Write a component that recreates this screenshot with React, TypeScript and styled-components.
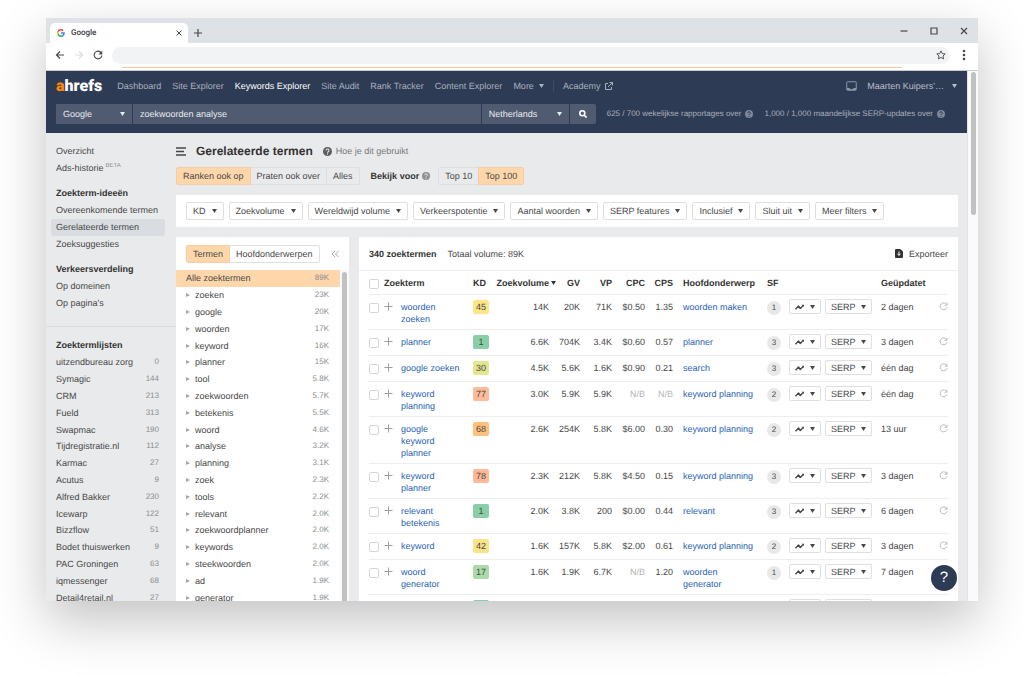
import React from "react";
import styled, { createGlobalStyle, css } from "styled-components";

const c = {
  navy: "#2e3b55",
  field: "#505b72",
  page: "#e9eaec",
  peach: "#ffd7ab",
  peachEdge: "#f4cda2",
  edge: "#dfdfe0",
  line: "#eeeeee",
  text: "#484848",
  strong: "#333333",
  muted: "#8b8c8e",
  link: "#2b63b6",
};

const Global = createGlobalStyle`
  *, *::before, *::after { box-sizing: border-box; }
  body {
    margin: 0;
    background: #ffffff;
    overflow: hidden;
  }
  body, button, input, select {
    font-family: "Liberation Sans", Arial, sans-serif;
    font-size: 9px;
    line-height: 12px;
    color: ${c.text};
    text-rendering: geometricPrecision;
  }
  button { cursor: pointer; }
  a { text-decoration: none; color: inherit; }
  svg { display: block; flex: none; }
`;

/* ---------- browser frame ---------- */

const Desktop = styled.div`
  display: flex;
  height: 100vh;
  padding: 18px 46px 74px;
`;

const BrowserWindow = styled.div`
  flex: 1;
  min-width: 0;
  display: flex;
  flex-direction: column;
  overflow: hidden;
  background: ${c.page};
  box-shadow: 0 20px 50px rgba(0, 0, 0, 0.24);
`;

const TabStrip = styled.div`
  flex: none;
  display: flex;
  align-items: flex-end;
  height: 25px;
  padding-left: 4px;
  background: #dee1e6;
`;

const Tab = styled.div`
  display: flex;
  align-items: center;
  gap: 6px;
  width: 138px;
  height: 20px;
  padding: 0 6px 0 7px;
  border-radius: 5px 5px 0 0;
  background: #ffffff;
`;

const TabTitle = styled.span`
  flex: 1;
  font-family: Roboto, sans-serif;
  font-size: 8px;
  font-weight: 500;
  color: #3c4043;
`;

const IconButton = styled.button`
  display: flex;
  align-items: center;
  justify-content: center;
  padding: 0;
  border: 0;
  background: none;
  color: #45494d;

  &:disabled { color: #dcdddf; }
`;

const NewTab = styled(IconButton)`
  width: 20px;
  height: 20px;
`;

const WindowButtons = styled.div`
  display: flex;
  align-items: center;
  gap: 20px;
  height: 25px;
  margin-left: auto;
  padding-right: 9px;
`;

const AddressRow = styled.div`
  flex: none;
  display: flex;
  align-items: center;
  gap: 9px;
  height: 24px;
  padding: 0 9px;
  background: #ffffff;
`;

const Address = styled.div`
  flex: 1;
  display: flex;
  align-items: center;
  height: 17px;
  padding-right: 4px;
  border-radius: 9px;
  background: #f1f3f4;
`;

const AddressInput = styled.input`
  flex: 1;
  border: 0;
  padding: 0 10px;
  background: none;
  outline: none;
`;

const LoadingTrack = styled.div`
  flex: none;
  height: 4px;
  padding: 0 76px;
  background: #ffffff;
  border-bottom: 1px solid #c9cbd0;
`;

const LoadingBar = styled.div`
  height: 1px;
  background: #f8c598;
`;

const Viewport = styled.div`
  flex: 1;
  min-height: 0;
  display: flex;
`;

const Page = styled.div`
  position: relative;
  flex: 1;
  min-width: 0;
  display: flex;
  flex-direction: column;
  overflow: hidden;
`;

const ScrollTrack = styled.div`
  flex: none;
  width: 11px;
  padding: 1px 3px;
  background: #fafafa;
  border-left: 1px solid #e4e4e6;
`;

const ScrollThumb = styled.div<{ $h: string }>`
  width: 5px;
  height: ${(p) => p.$h};
  border-radius: 3px;
  background: #c1c1c1;
`;

/* ---------- application header ---------- */

const Header = styled.header`
  flex: none;
  padding: 5px 10px 9px;
  background: ${c.navy};
`;

const NavRow = styled.nav`
  display: flex;
  align-items: center;
  gap: 11px;
  height: 20px;
  color: #a9b0bc;
`;

const Logo = styled.a`
  margin-right: 4px;
  font-family: Roboto, sans-serif;
  font-size: 16px;
  font-weight: 900;
  line-height: 16px;
  color: #ffffff;
`;

const LogoMark = styled.span`
  color: #ff8800;
`;

const NavLink = styled.a<{ $active?: boolean }>`
  display: flex;
  align-items: center;
  gap: 5px;
  white-space: nowrap;
  color: ${(p) => (p.$active ? "#ffffff" : "inherit")};
`;

const NavDivider = styled.span`
  width: 1px;
  height: 12px;
  margin: 0 -2px;
  background: #414d65;
`;

const Account = styled.div`
  display: flex;
  align-items: center;
  gap: 10px;
  margin-left: auto;
`;

const AccountButton = styled.button`
  display: flex;
  align-items: center;
  gap: 8px;
  padding: 0;
  border: 0;
  background: none;
  color: #b9bfc9;
`;

const SearchRow = styled.div`
  display: flex;
  align-items: center;
  gap: 11px;
  margin-top: 8px;
`;

const SearchForm = styled.form`
  flex: 1;
  min-width: 0;
  display: flex;
  gap: 1px;
  height: 20px;
`;

const SelectBox = styled.label<{ $w: number }>`
  position: relative;
  flex: none;
  width: ${(p) => p.$w}px;
  background: ${c.field};
  color: #e9ebee;

  svg {
    position: absolute;
    right: 7px;
    top: 8px;
    pointer-events: none;
  }
`;

const Select = styled.select`
  appearance: none;
  width: 100%;
  height: 100%;
  padding: 0 7px;
  border: 0;
  background: transparent;
  color: #e9ebee;
`;

const Keyword = styled.input`
  flex: 1;
  min-width: 0;
  padding: 0 7px;
  border: 0;
  border-radius: 0;
  background: ${c.field};
  color: #e9ebee;
`;

const SearchButton = styled(IconButton)`
  width: 26px;
  border-radius: 0 2px 2px 0;
  background: ${c.field};
  color: #ffffff;
`;

const Quota = styled.span`
  display: flex;
  align-items: center;
  gap: 4px;
  white-space: nowrap;
  font-size: 8px;
  color: #a9b0bc;

  &:last-child { margin-right: 12px; }
`;

/* ---------- sidebar ---------- */

const Body = styled.div`
  flex: 1;
  min-height: 0;
  display: flex;
`;

const Sidebar = styled.aside`
  flex: none;
  width: 130px;
  padding-top: 10px;
`;

const SideGroup = styled.div`
  display: flex;
  flex-direction: column;
  padding: 0 11px 0 5px;
  margin-bottom: 8px;
`;

const SideHeading = styled.h2`
  margin: 0;
  padding-left: 5px;
  font-size: 9px;
  line-height: 17px;
  color: ${c.strong};
`;

const SideLink = styled.a<{ $active?: boolean }>`
  padding-left: 5px;
  line-height: 17px;
  white-space: nowrap;
  border-radius: 2px;
  background: ${(p) => (p.$active ? "#d9dce1" : "none")};
`;

const Beta = styled.sup`
  padding-left: 2px;
  font-size: 6px;
  line-height: 6px;
  vertical-align: 4px;
  color: ${c.muted};
`;

const SideRule = styled.hr`
  height: 1px;
  margin: 14px 0 10px;
  border: 0;
  background: #dadde2;
`;

const KeywordLists = styled.ul`
  display: grid;
  grid-auto-rows: 1fr;
  align-items: center;
  height: 252px;
  margin: 0;
  padding: 0 6px 0 5px;
  list-style: none;
`;

const ListItem = styled.li`
  display: flex;
  align-items: center;
  justify-content: space-between;
`;

const Count = styled.span`
  font-size: 8px;
  color: ${c.muted};
`;

/* ---------- main ---------- */

const Main = styled.main`
  flex: 1;
  min-width: 0;
  display: flex;
  flex-direction: column;
  padding: 8px 9px 0 0;
`;

const TitleRow = styled.div`
  display: flex;
  align-items: center;
  gap: 10px;
  height: 20px;
`;

const Title = styled.h1`
  margin: 0;
  font-size: 12px;
  line-height: 20px;
  color: ${c.strong};
`;

const HowTo = styled.a`
  display: flex;
  align-items: center;
  gap: 4px;
  color: #77787a;
`;

const ModeRow = styled.div`
  display: flex;
  align-items: center;
  gap: 11px;
  margin-top: 6px;
`;

const Segments = styled.div`
  display: flex;
`;

const Segment = styled.button<{ $on?: boolean }>`
  height: 18px;
  margin-left: -1px;
  padding: 0 6px;
  border: 1px solid ${c.edge};
  background: transparent;
  white-space: nowrap;

  &:first-child {
    margin-left: 0;
    border-radius: 2px 0 0 2px;
  }
  &:last-child { border-radius: 0 2px 2px 0; }

  ${(p) =>
    p.$on &&
    css`
      position: relative;
      background: ${c.peach};
      border-color: ${c.peachEdge};
    `}
`;

const ViewFor = styled.span`
  display: flex;
  align-items: center;
  gap: 3px;
  margin-right: -3px;
  font-weight: bold;
  color: ${c.strong};
`;

const FilterCard = styled.section`
  display: flex;
  gap: 5px;
  margin-top: 10px;
  padding: 7px 10px;
  background: #ffffff;
`;

const DropButton = styled.button<{ $small?: boolean }>`
  display: flex;
  align-items: center;
  gap: ${(p) => (p.$small ? 5 : 6)}px;
  height: ${(p) => (p.$small ? 15 : 18)}px;
  padding: 0 ${(p) => (p.$small ? 5 : 6)}px;
  border: 1px solid ${c.edge};
  border-radius: 2px;
  background: #ffffff;
  white-space: nowrap;
`;

const Panels = styled.div`
  flex: 1;
  min-height: 0;
  display: flex;
  gap: 10px;
  margin-top: 10px;
`;

const TermsPanel = styled.section`
  flex: none;
  width: 173px;
  background: #ffffff;
  overflow: hidden;
`;

const PanelHead = styled.div`
  display: flex;
  align-items: center;
  gap: 11px;
  height: 33px;
  padding: 0 10px;
`;

const PushRight = styled.div`
  margin-left: auto;
`;

const TermScroller = styled.div`
  display: flex;
`;

const TermList = styled.ul`
  flex: 1;
  display: grid;
  grid-auto-rows: 1fr;
  height: 336px;
  margin: 0;
  padding: 0;
  list-style: none;
`;

const TermItem = styled.li<{ $on?: boolean }>`
  display: flex;
  align-items: center;
  gap: 5px;
  padding: 0 11px 0 10px;
  background: ${(p) => (p.$on ? c.peach : "none")};
`;

const TermName = styled.span`
  flex: 1;
`;

const ListScroll = styled.div`
  flex: none;
  width: 9px;
  padding: 2px;
  background: #fafafa;
`;

const ResultsPanel = styled.section`
  flex: 1;
  min-width: 0;
  background: #ffffff;
  overflow: hidden;
`;

const ResultsTotal = styled.strong`
  color: ${c.strong};
`;

const ExportButton = styled.button`
  display: flex;
  align-items: center;
  gap: 6px;
  padding: 0;
  border: 0;
  background: none;
`;

const TableWrap = styled.div`
  padding: 0 10px;
  border-top: 1px solid ${c.line};
`;

const Table = styled.table`
  width: 100%;
  table-layout: fixed;
  border-collapse: separate;
  border-spacing: 0;
`;

const Th = styled.th<{ $right?: boolean; $pad?: number }>`
  height: 24px;
  padding: 0 0 0 ${(p) => p.$pad ?? 0}px;
  border-bottom: 1px solid ${c.line};
  text-align: ${(p) => (p.$right ? "right" : "left")};
  vertical-align: middle;
  white-space: nowrap;
  color: ${c.strong};
`;

const SortLabel = styled.span`
  display: flex;
  align-items: center;
  justify-content: flex-end;
  gap: 2px;
  margin-right: -7px;
`;

const Td = styled.td<{ $right?: boolean; $pad?: number; $top?: number }>`
  padding: ${(p) => p.$top ?? 6}px 0 4px ${(p) => p.$pad ?? 0}px;
  border-bottom: 1px solid ${c.line};
  text-align: ${(p) => (p.$right ? "right" : "left")};
  vertical-align: top;
`;

const ButtonTd = styled(Td)`
  padding-bottom: 6px;
`;

const Check = styled.input`
  appearance: none;
  display: block;
  width: 10px;
  height: 10px;
  margin: 2px 0 0;
  border: 1px solid #d6d6d8;
  border-radius: 2px;
  background: #ffffff;
`;

const TermLink = styled.a`
  display: block;
  color: ${c.link};
`;

const Score = styled.span<{ $bg: string }>`
  display: block;
  width: 16px;
  height: 14px;
  border-radius: 2px;
  line-height: 14px;
  text-align: center;
  background: ${(p) => p.$bg};
`;

const Missing = styled.span`
  color: #b4b4b4;
`;

const Features = styled.span`
  display: block;
  width: 14px;
  height: 14px;
  border-radius: 7px;
  line-height: 14px;
  font-size: 8px;
  text-align: center;
  background: #e8e8e8;
`;

const Refresh = styled(IconButton)`
  margin: 1px 0 0 auto;
  color: #b4b4b4;
`;

const HelpButton = styled.button`
  position: absolute;
  right: 10px;
  bottom: 10px;
  width: 26px;
  height: 26px;
  padding: 0;
  border: 0;
  border-radius: 13px;
  background: ${c.navy};
  color: #ffffff;
  font-size: 15px;
  line-height: 26px;
`;

/* ---------- icons ---------- */

const Caret = ({ s = 5 }: { s?: number }) => (
  <svg width={s} height={s - 1} viewBox="0 0 5 4" aria-hidden="true">
    <path d="M0 0h5L2.5 4z" fill="currentColor" />
  </svg>
);

const Question = ({ s = 8, fill = "#8f9092", ink = "#e9eaec" }) => (
  <svg width={s} height={s} viewBox="0 0 16 16" aria-hidden="true">
    <circle cx="8" cy="8" r="8" fill={fill} />
    <path d="M5.4 6.2a2.6 2.6 0 1 1 3.9 2.2C8.4 9 8 9.300 8 10.300" fill="none" stroke={ink} strokeWidth="1.900" />
    <circle cx="8" cy="12.500" r="1.200" fill={ink} />
  </svg>
);

const GoogleG = () => (
  <svg width="8" height="8" viewBox="0 0 48 48" aria-hidden="true">
    <path fill="#EA4335" d="M24 9.500c3.540 0 6.710 1.220 9.210 3.600l6.850-6.850C35.900 2.380 30.470 0 24 0 14.620 0 6.510 5.380 2.560 13.220l7.980 6.190C12.430 13.720 17.740 9.500 24 9.500z" />
    <path fill="#4285F4" d="M46.980 24.550c0-1.570-.15-3.090-.38-4.550H24v9.020h12.940c-.58 2.960-2.260 5.480-4.780 7.180l7.730 6c4.510-4.180 7.090-10.360 7.090-17.650z" />
    <path fill="#FBBC05" d="M10.530 28.590c-.48-1.450-.76-2.990-.76-4.590s.27-3.140.76-4.590l-7.980-6.190C.92 16.460 0 20.120 0 24c0 3.880.92 7.540 2.560 10.780l7.970-6.190z" />
    <path fill="#34A853" d="M24 48c6.480 0 11.930-2.130 15.890-5.810l-7.730-6c-2.150 1.450-4.920 2.300-8.160 2.300-6.260 0-11.570-4.220-13.470-9.910l-7.980 6.190C6.510 42.620 14.620 48 24 48z" />
  </svg>
);

const Stroke = ({ d, w = 10, h = 10, sw = 1.2, box }: { d: string; w?: number; h?: number; sw?: number; box?: string }) => (
  <svg width={w} height={h} viewBox={box ?? `0 0 ${w} ${h}`} fill="none" stroke="currentColor" strokeWidth={sw} aria-hidden="true">
    <path d={d} />
  </svg>
);

const Reload = ({ s = 10 }: { s?: number }) => (
  <svg width={s} height={s} viewBox="0 0 16 16" aria-hidden="true">
    <path d="M13.200 4.500A6.200 6.200 0 1 0 14.200 8.800" fill="none" stroke="currentColor" strokeWidth="1.800" />
    <path d="M14.800 1v6H8.800z" fill="currentColor" />
  </svg>
);

const RowReload = () => (
  <svg width="9" height="9" viewBox="0 0 18 18" fill="none" stroke="currentColor" strokeWidth="1.800" aria-hidden="true">
    <path d="M15.500 5.500A7 7 0 1 0 16 10.500M16 1.500v5h-5" />
  </svg>
);

const Trend = () => (
  <svg width="10" height="6" viewBox="0 0 20 12" fill="none" stroke="currentColor" strokeWidth="2.800" aria-hidden="true">
    <path d="M1 10.500L7 4l3.500 5L17 2.500" strokeLinejoin="round" />
    <path d="M13.500 1.500H18V6z" fill="currentColor" stroke="none" />
  </svg>
);

const ExportIcon = () => (
  <svg width="8" height="9" viewBox="0 0 16 18" aria-hidden="true">
    <path d="M2 0h8.500L16 5v11a2 2 0 0 1-2 2H2a2 2 0 0 1-2-2V2a2 2 0 0 1 2-2z" fill="#333333" />
    <path d="M8 5v7M5 9.500l3 3.500 3-3.500" fill="none" stroke="#ffffff" strokeWidth="2" />
  </svg>
);

/* ---------- data ---------- */

const lists: [string, string][] = [
  ["uitzendbureau zorg", "0"],
  ["Symagic", "144"],
  ["CRM", "213"],
  ["Fueld", "313"],
  ["Swapmac", "190"],
  ["Tijdregistratie.nl", "112"],
  ["Karmac", "27"],
  ["Acutus", "9"],
  ["Alfred Bakker", "230"],
  ["Icewarp", "122"],
  ["Bizzflow", "51"],
  ["Bodet thuiswerken", "9"],
  ["PAC Groningen", "63"],
  ["iqmessenger", "68"],
  ["Detail4retail.nl", "27"],
];

const terms: [string, string][] = [
  ["zoeken", "23K"],
  ["google", "20K"],
  ["woorden", "17K"],
  ["keyword", "16K"],
  ["planner", "15K"],
  ["tool", "5.8K"],
  ["zoekwoorden", "5.7K"],
  ["betekenis", "5.5K"],
  ["woord", "4.6K"],
  ["analyse", "3.2K"],
  ["planning", "3.1K"],
  ["zoek", "2.3K"],
  ["tools", "2.2K"],
  ["relevant", "2.0K"],
  ["zoekwoordplanner", "2.0K"],
  ["keywords", "2.0K"],
  ["steekwoorden", "2.0K"],
  ["ad", "1.9K"],
  ["generator", "1.9K"],
];

const filters = [
  "KD",
  "Zoekvolume",
  "Wereldwijd volume",
  "Verkeerspotentie",
  "Aantal woorden",
  "SERP features",
  "Inclusief",
  "Sluit uit",
  "Meer filters",
];

type Row = {
  term: string;
  kd: string;
  color: string;
  nums: string[];
  parent: string;
  sf: string;
  date: string;
};

const rows: Row[] = [
  { term: "woorden zoeken", kd: "45", color: "#fde587", nums: ["14K", "20K", "71K", "$0.50", "1.35"], parent: "woorden maken", sf: "1", date: "2 dagen" },
  { term: "planner", kd: "1", color: "#88cfa8", nums: ["6.6K", "704K", "3.4K", "$0.60", "0.57"], parent: "planner", sf: "3", date: "3 dagen" },
  { term: "google zoeken", kd: "30", color: "#e4e591", nums: ["4.5K", "5.6K", "1.6K", "$0.90", "0.21"], parent: "search", sf: "3", date: "één dag" },
  { term: "keyword planning", kd: "77", color: "#ffba98", nums: ["3.0K", "5.9K", "5.9K", "N/B", "N/B"], parent: "keyword planning", sf: "2", date: "één dag" },
  { term: "google keyword planner", kd: "68", color: "#ffc17c", nums: ["2.6K", "254K", "5.8K", "$6.00", "0.30"], parent: "keyword planning", sf: "2", date: "13 uur" },
  { term: "keyword planner", kd: "78", color: "#ffb998", nums: ["2.3K", "212K", "5.8K", "$4.50", "0.15"], parent: "keyword planning", sf: "3", date: "3 dagen" },
  { term: "relevant betekenis", kd: "1", color: "#88cfa8", nums: ["2.0K", "3.8K", "200", "$0.00", "0.44"], parent: "relevant", sf: "3", date: "6 dagen" },
  { term: "keyword", kd: "42", color: "#fbe488", nums: ["1.6K", "157K", "5.8K", "$2.00", "0.61"], parent: "keyword planning", sf: "2", date: "3 dagen" },
  { term: "woord generator", kd: "17", color: "#abdba9", nums: ["1.6K", "1.9K", "6.7K", "N/B", "1.20"], parent: "woorden generator", sf: "1", date: "7 dagen" },
  { term: "", kd: "", color: "#88cfa8", nums: ["", "", "", "", ""], parent: "", sf: "", date: "" },
];

const columnWidths = [15, 17, 62, 30, 56, 31, 32, 33, 28, 84, 24, 40, 50, undefined, 20];

/* ---------- parts ---------- */

function Browser() {
  return (
    <>
      <TabStrip>
        <Tab>
          <GoogleG />
          <TabTitle>Google</TabTitle>
          <IconButton aria-label="Tabblad sluiten">
            <Stroke w={6} h={6} sw={1} d="M.5.5l5 5M5.500.5l-5 5" />
          </IconButton>
        </Tab>
        <NewTab aria-label="Nieuw tabblad">
          <Stroke w={8} h={8} d="M4 0v8M0 4h8" />
        </NewTab>
        <WindowButtons>
          <IconButton aria-label="Minimaliseren">
            <Stroke w={10} d="M1.500 5h7" />
          </IconButton>
          <IconButton aria-label="Maximaliseren">
            <Stroke w={10} d="M2 2h6v6H2z" />
          </IconButton>
          <IconButton aria-label="Sluiten">
            <Stroke w={10} d="M2 2l6 6M8 2L2 8" />
          </IconButton>
        </WindowButtons>
      </TabStrip>
      <AddressRow>
        <IconButton aria-label="Vorige">
          <Stroke d="M9 5H1.500M5 1.500L1.500 5L5 8.500" />
        </IconButton>
        <IconButton aria-label="Volgende" disabled>
          <Stroke d="M1 5h7.500M5 1.500L8.500 5L5 8.500" />
        </IconButton>
        <IconButton aria-label="Vernieuwen">
          <Reload s={10} />
        </IconButton>
        <Address>
          <AddressInput aria-label="Adres" />
          <IconButton aria-label="Bladwijzer">
            <Stroke w={10} h={10} box="0 0 20 20" sw={1.8} d="M10 1.800l2.500 5.400 5.900.7-4.400 4 1.200 5.900L10 14.900l-5.200 2.900L6 11.900l-4.400-4 5.900-.7z" />
          </IconButton>
        </Address>
        <IconButton aria-label="Menu">
          <svg width="10" height="12" viewBox="0 0 10 12" fill="currentColor">
            <circle cx="5" cy="2" r="1.300" />
            <circle cx="5" cy="6" r="1.300" />
            <circle cx="5" cy="10" r="1.300" />
          </svg>
        </IconButton>
      </AddressRow>
      <LoadingTrack>
        <LoadingBar />
      </LoadingTrack>
    </>
  );
}

function AppHeader() {
  return (
    <Header>
      <NavRow>
        <Logo href="#">
          <LogoMark>a</LogoMark>hrefs
        </Logo>
        <NavLink href="#">Dashboard</NavLink>
        <NavLink href="#">Site Explorer</NavLink>
        <NavLink href="#" $active>Keywords Explorer</NavLink>
        <NavLink href="#">Site Audit</NavLink>
        <NavLink href="#">Rank Tracker</NavLink>
        <NavLink href="#">Content Explorer</NavLink>
        <NavLink href="#">More <Caret /></NavLink>
        <NavDivider />
        <NavLink href="#">
          Academy
          <Stroke w={8} h={8} sw={1} d="M3 1.500H.5v6h6V5M4.500.5h3v3M7.500.5L3 5" />
        </NavLink>
        <Account>
          <svg width="11" height="10" viewBox="0 0 22 20" aria-hidden="true">
            <rect x="1.500" y="1.500" width="19" height="17" rx="1.500" fill="none" stroke="#8d96a5" strokeWidth="2" />
            <path d="M2 14h5l1.500 2h5L15 14h5v4H2z" fill="#8d96a5" />
          </svg>
          <AccountButton>
            Maarten Kuipers'… <Caret />
          </AccountButton>
        </Account>
      </NavRow>
      <SearchRow>
        <SearchForm onSubmit={(e) => e.preventDefault()}>
          <SelectBox $w={76}>
            <Select aria-label="Zoekmachine">
              <option>Google</option>
            </Select>
            <Caret />
          </SelectBox>
          <Keyword aria-label="Zoekterm" defaultValue="zoekwoorden analyse" />
          <SelectBox $w={87}>
            <Select aria-label="Land">
              <option>Netherlands</option>
            </Select>
            <Caret />
          </SelectBox>
          <SearchButton aria-label="Zoeken">
            <Stroke w={8} h={8} sw={1.6} d="M5.800 3.300a2.500 2.500 0 1 1-5 0a2.500 2.500 0 1 1 5 0M5.200 5.200L7.600 7.600" />
          </SearchButton>
        </SearchForm>
        <Quota>
          625 / 700 wekelijkse rapportages over <Question fill="#7d8798" ink={c.navy} />
        </Quota>
        <Quota>
          1,000 / 1,000 maandelijkse SERP-updates over <Question fill="#7d8798" ink={c.navy} />
        </Quota>
      </SearchRow>
    </Header>
  );
}

function SideNav() {
  return (
    <Sidebar>
      <SideGroup>
        <SideLink href="#">Overzicht</SideLink>
        <SideLink href="#">Ads-historie<Beta>BETA</Beta></SideLink>
      </SideGroup>
      <SideGroup>
        <SideHeading>Zoekterm-ideeën</SideHeading>
        <SideLink href="#">Overeenkomende termen</SideLink>
        <SideLink href="#" $active>Gerelateerde termen</SideLink>
        <SideLink href="#">Zoeksuggesties</SideLink>
      </SideGroup>
      <SideGroup>
        <SideHeading>Verkeersverdeling</SideHeading>
        <SideLink href="#">Op domeinen</SideLink>
        <SideLink href="#">Op pagina's</SideLink>
      </SideGroup>
      <SideRule />
      <SideGroup>
        <SideHeading>Zoektermlijsten</SideHeading>
        <KeywordLists>
          {lists.map(([name, count]) => (
            <ListItem key={name}>
              <a href="#">{name}</a>
              <Count>{count}</Count>
            </ListItem>
          ))}
        </KeywordLists>
      </SideGroup>
    </Sidebar>
  );
}

function ResultRow({ row }: { row: Row }) {
  return (
    <tr>
      <Td>
        <Check type="checkbox" aria-label={row.term || "Zoekterm"} />
      </Td>
      <Td>
        <IconButton aria-label="Toevoegen">
          <svg width="10" height="12" viewBox="0 0 10 12" fill="none" stroke="#9d9d9d" strokeWidth="1">
            <path d="M4.500 1.500v8M.5 5.500h8" />
          </svg>
        </IconButton>
      </Td>
      <Td>
        <TermLink href="#">{row.term}</TermLink>
      </Td>
      <Td $top={5} $pad={10}>
        <Score $bg={row.color}>{row.kd}</Score>
      </Td>
      {row.nums.map((n, i) => (
        <Td key={i} $right>
          {n === "N/B" ? <Missing>{n}</Missing> : n}
        </Td>
      ))}
      <Td $pad={10}>
        <TermLink href="#">{row.parent}</TermLink>
      </Td>
      <Td $pad={10}>
        <Features>{row.sf}</Features>
      </Td>
      <ButtonTd $top={4} $pad={8}>
        <DropButton $small aria-label="Trend">
          <Trend />
          <Caret />
        </DropButton>
      </ButtonTd>
      <ButtonTd $top={4} $pad={4}>
        <DropButton $small>
          SERP <Caret />
        </DropButton>
      </ButtonTd>
      <Td $pad={10}>{row.date}</Td>
      <Td>
        <Refresh aria-label="Vernieuwen">
          <RowReload />
        </Refresh>
      </Td>
    </tr>
  );
}

export default function App() {
  return (
    <Desktop>
      <Global />
      <BrowserWindow>
        <Browser />
        <Viewport>
          <Page>
            <AppHeader />
            <Body>
              <SideNav />
              <Main>
                <TitleRow>
                  <Stroke w={10} h={9} sw={1.3} d="M0 1h10M0 4.500h8M0 8h10" />
                  <Title>Gerelateerde termen</Title>
                  <HowTo href="#">
                    <Question s={9} fill="#5c5d5f" /> Hoe je dit gebruikt
                  </HowTo>
                </TitleRow>
                <ModeRow>
                  <Segments>
                    <Segment $on>Ranken ook op</Segment>
                    <Segment>Praten ook over</Segment>
                    <Segment>Alles</Segment>
                  </Segments>
                  <ViewFor>
                    Bekijk voor <Question />
                  </ViewFor>
                  <Segments>
                    <Segment>Top 10</Segment>
                    <Segment $on>Top 100</Segment>
                  </Segments>
                </ModeRow>
                <FilterCard>
                  {filters.map((f) => (
                    <DropButton key={f}>
                      {f} <Caret />
                    </DropButton>
                  ))}
                </FilterCard>
                <Panels>
                  <TermsPanel>
                    <PanelHead>
                      <Segments>
                        <Segment $on>Termen</Segment>
                        <Segment>Hoofdonderwerpen</Segment>
                      </Segments>
                      <IconButton aria-label="Inklappen">
                        <svg width="8" height="8" viewBox="0 0 8 8" fill="none" stroke="#a5a5a5" strokeWidth="1">
                          <path d="M4 1L1 4l3 3M7.500 1l-3 3 3 3" />
                        </svg>
                      </IconButton>
                    </PanelHead>
                    <TermScroller>
                      <TermList>
                        <TermItem $on>
                          <TermName>Alle zoektermen</TermName>
                          <Count>89K</Count>
                        </TermItem>
                        {terms.map(([name, volume]) => (
                          <TermItem key={name}>
                            <svg width="4" height="4" viewBox="0 0 4 4" aria-hidden="true">
                              <path d="M0 0l4 2-4 2z" fill="#a5a5a5" />
                            </svg>
                            <TermName>{name}</TermName>
                            <Count>{volume}</Count>
                          </TermItem>
                        ))}
                      </TermList>
                      <ListScroll>
                        <ScrollThumb $h="100%" />
                      </ListScroll>
                    </TermScroller>
                  </TermsPanel>
                  <ResultsPanel>
                    <PanelHead>
                      <ResultsTotal>340 zoektermen</ResultsTotal>
                      <span>Totaal volume: 89K</span>
                      <PushRight>
                        <ExportButton>
                          <ExportIcon /> Exporteer
                        </ExportButton>
                      </PushRight>
                    </PanelHead>
                    <TableWrap>
                      <Table>
                        <colgroup>
                          {columnWidths.map((w, i) => (
                            <col key={i} width={w} />
                          ))}
                        </colgroup>
                        <thead>
                          <tr>
                            <Th>
                              <Check type="checkbox" aria-label="Alles selecteren" />
                            </Th>
                            <Th colSpan={2}>Zoekterm</Th>
                            <Th $pad={10}>KD</Th>
                            <Th $right>
                              <SortLabel>
                                Zoekvolume <Caret />
                              </SortLabel>
                            </Th>
                            <Th $right>GV</Th>
                            <Th $right>VP</Th>
                            <Th $right>CPC</Th>
                            <Th $right>CPS</Th>
                            <Th $pad={10}>Hoofdonderwerp</Th>
                            <Th $pad={10} colSpan={3}>SF</Th>
                            <Th $pad={10} colSpan={2}>Geüpdatet</Th>
                          </tr>
                        </thead>
                        <tbody>
                          {rows.map((row, i) => (
                            <ResultRow key={i} row={row} />
                          ))}
                        </tbody>
                      </Table>
                    </TableWrap>
                  </ResultsPanel>
                </Panels>
              </Main>
            </Body>
            <HelpButton aria-label="Help">?</HelpButton>
          </Page>
          <ScrollTrack>
            <ScrollThumb $h="143px" />
          </ScrollTrack>
        </Viewport>
      </BrowserWindow>
    </Desktop>
  );
}
